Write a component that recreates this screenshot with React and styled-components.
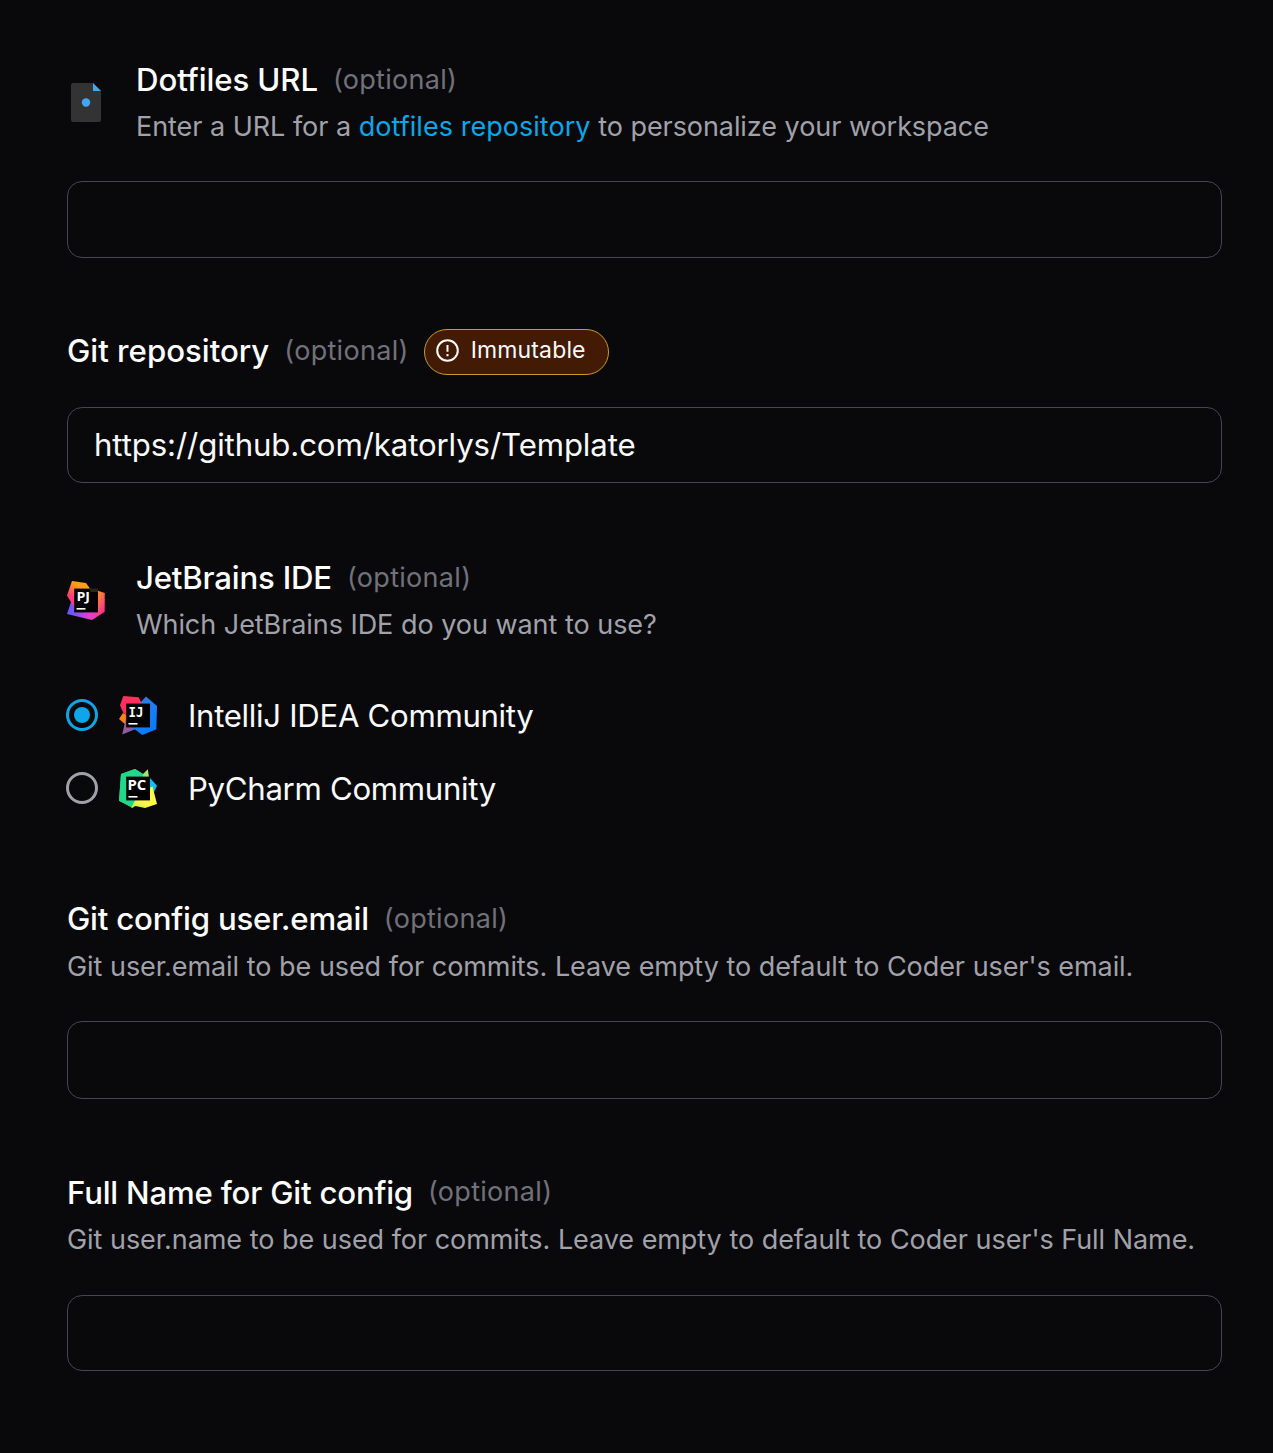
import React from "react";
import styled, { createGlobalStyle } from "styled-components";

const Global = createGlobalStyle`
  * { box-sizing: border-box; }
  body { margin: 0; background: #09090b; }
`;

const Form = styled.form`
  width: 1273px;
  min-height: 1453px;
  padding: 57px 51px 82px 67px;
  display: flex;
  flex-direction: column;
  background: #09090b;
  color: #fafafa;
  font-family: Inter, "Liberation Sans", sans-serif;
`;

const Field = styled.section`
  display: flex;
  flex-direction: column;
  gap: ${(p) => p.$gap || 31}px;
  margin-bottom: ${(p) => p.$after || 0}px;
`;

const Header = styled.header`
  display: flex;
  align-items: center;
  gap: 31px;
`;

const Labels = styled.div`
  display: flex;
  flex-direction: column;
`;

const TitleRow = styled.div`
  display: flex;
  align-items: center;
  height: 46px;
  white-space: nowrap;
`;

const Title = styled.label`
  padding-bottom: ${(p) => p.$lift ?? 2}px;
  font-size: 31.2px;
  line-height: 44px;
  font-weight: 500;
  color: #fff;
  letter-spacing: ${(p) => p.$spacing ?? -0.2}px;
`;

const Optional = styled.span`
  margin-left: 15px;
  padding-bottom: ${(p) => p.$lift ?? 2}px;
  font-size: 27px;
  line-height: 44px;
  color: #71717a;
  letter-spacing: 0.3px;
`;

const Description = styled.p`
  margin: 0;
  font-size: 27px;
  height: 47px;
  line-height: ${(p) => p.$line || 47}px;
  color: #a1a1aa;
  letter-spacing: -0.08px;
  word-spacing: 0.2px;
  white-space: nowrap;
`;

const Link = styled.a`
  color: #0ea5e9;
  letter-spacing: 0.02px;
  text-decoration: none;
`;

const Badge = styled.span`
  display: flex;
  align-items: center;
  gap: 12px;
  width: 185px;
  height: 46px;
  margin-left: 15px;
  padding: 0 0 4px 10px;
  border: 1px solid #ca9a2c;
  border-radius: 23px;
  background: #431a04;
  color: #fafafa;
  font-size: 23px;
  letter-spacing: 0.15px;
`;

const Input = styled.input`
  display: block;
  width: 1155px;
  height: ${(p) => p.$height || 77}px;
  padding: 0 26px;
  border: 1px solid #46464d;
  border-radius: 15px;
  outline: none;
  background: transparent;
  color: #fafafa;
  font: 400 31.2px Inter, "Liberation Sans", sans-serif;
  letter-spacing: -0.12px;
`;

const Options = styled.div`
  display: flex;
  flex-direction: column;
  gap: 27px;
`;

const Option = styled.label`
  display: flex;
  align-items: center;
  height: 46px;
  padding-bottom: 1px;
  font-size: 31.2px;
  letter-spacing: -0.32px;
  white-space: nowrap;
`;

const Radio = styled.span`
  display: grid;
  place-items: center;
  width: 32px;
  height: 32px;
  margin-left: -1px;
  margin-right: 21px;
  margin-bottom: 1px;
  border: 3px solid ${(p) => (p.$checked ? "#0ea5e9" : "#a1a1aa")};
  border-radius: 50%;
  &::after {
    content: "";
    width: 16px;
    height: 16px;
    border-radius: 50%;
    background: ${(p) => (p.$checked ? "#0ea5e9" : "transparent")};
  }
`;

const OptionName = styled.span`
  margin-left: 31px;
  padding-top: 1px;
`;

const Icon = styled.svg`
  display: block;
  flex: none;
  overflow: visible;
  margin-bottom: ${(p) => p.$lift || 0}px;
`;

function FileIcon() {
  return (
    <Icon $lift={2} width="38" height="39" viewBox="0 0 38 39">
      <path d="M6 0H26L34 8V37Q34 39 32 39H6Q4 39 4 37V2Q4 0 6 0Z" fill="#333" />
      <path d="M26 0L34 8H26Z" fill="#42a5f5" />
      <circle cx="19" cy="19.5" r="4.2" fill="#42a5f5" />
    </Icon>
  );
}

function Plate({ text }) {
  const letters = {
    PJ: { x: 9.4, y: 19.7, size: 12.2, width: 13.6, font: "Open Sans, sans-serif" },
    IJ: { x: 9.6, y: 20.6, size: 13.4, width: 14.8, font: "DejaVu Sans Mono, monospace" },
    PC: { x: 8.4, y: 20.6, size: 13.4, width: 18.8, font: "Open Sans, sans-serif" },
  }[text];
  return (
    <>
      <rect x="7.2" y="7.6" width="23.8" height="23.8" fill="#000" />
      <rect x="9.5" y="27" width="9" height="1.6" fill="#fff" />
      <text x={letters.x} y={letters.y} fontFamily={letters.font} fontWeight="700" fontSize={letters.size}
        fill="#fff" letterSpacing="0" textLength={letters.width} lengthAdjust="spacingAndGlyphs">{text}</text>
    </>
  );
}

function ProjectorIcon() {
  return (
    <Icon $lift={5} width="38" height="39" viewBox="0 0 38 39">
      <defs>
        <linearGradient id="pjTop" x1="0.6" y1="0" x2="0.1" y2="1">
          <stop offset="0.2" stopColor="#ff9f16" />
          <stop offset="0.65" stopColor="#ff3b78" />
        </linearGradient>
        <linearGradient id="pjBase" x1="0" y1="0.5" x2="1" y2="0.5">
          <stop offset="0.12" stopColor="#6b57ff" />
          <stop offset="0.6" stopColor="#e43fd0" />
          <stop offset="1" stopColor="#ff318c" />
        </linearGradient>
        <linearGradient id="pjSide" x1="0" y1="0" x2="0.5" y2="1">
          <stop offset="0" stopColor="#ff9a28" />
          <stop offset="0.5" stopColor="#ff6652" />
          <stop offset="1" stopColor="#ff318c" />
        </linearGradient>
      </defs>
      <path d="M5 18L0 33L25 39L37.4 31V18Z" fill="url(#pjBase)" />
      <path d="M5 0L19 2L24 9L7 26L0 14.5Z" fill="url(#pjTop)" />
      <path d="M30 9.5L37.8 12L37.4 31L30 34Z" fill="url(#pjSide)" />
      <Plate text="PJ" />
      <path d="M22 7.6H31V11H24Z" fill="#2b2420" />
    </Icon>
  );
}

function IntelliJIcon() {
  return (
    <Icon width="38" height="39" viewBox="0 0 38 39">
      <defs>
        <linearGradient id="ijBlue" x1="0" y1="0" x2="0.5" y2="1">
          <stop offset="0" stopColor="#655fb5" />
          <stop offset="0.3" stopColor="#277ee7" />
          <stop offset="1" stopColor="#087cff" />
        </linearGradient>
        <linearGradient id="ijPurple" x1="0" y1="0" x2="1" y2="0.3">
          <stop offset="0" stopColor="#b15782" />
          <stop offset="0.65" stopColor="#7660b0" />
          <stop offset="1" stopColor="#087cff" />
        </linearGradient>
      </defs>
      <path d="M4 17L0 23L7 29L17 24Z" fill="#fc801d" />
      <path d="M7 22L3.2 38.5L24 30Z" fill="url(#ijPurple)" />
      <path d="M27 0.6L38 10L37.3 33.2L23.3 39L14 32L20 8Z" fill="url(#ijBlue)" />
      <path d="M4.3 0L19.6 1.3L23 8L13 22L4.4 17L1 9.2Z" fill="#fe315d" />
      <Plate text="IJ" />
    </Icon>
  );
}

function PyCharmIcon() {
  return (
    <Icon width="38" height="39" viewBox="0 0 38 39">
      <defs>
        <linearGradient id="pcGreen" x1="0" y1="0.5" x2="1" y2="0.5">
          <stop offset="0.2" stopColor="#21d789" />
          <stop offset="1" stopColor="#b5e866" />
        </linearGradient>
        <linearGradient id="pcYellow" x1="0" y1="1" x2="0.7" y2="0">
          <stop offset="0" stopColor="#c6ed54" />
          <stop offset="0.4" stopColor="#fcf84a" />
        </linearGradient>
      </defs>
      <path d="M31 9L38 16.7L34 25L27 20Z" fill="#07c3f2" />
      <path d="M2 5L16 0L24 5L28.8 0.3L31 15L13.7 39L0 31.7Z" fill="url(#pcGreen)" />
      <path d="M2 5L16 0L24 5L14 38.8L0 31.7Z" fill="#21d789" />
      <path d="M20 24L33.5 17.5L38 35L26 39L16.5 37L12 39Z" fill="url(#pcYellow)" />
      <Plate text="PC" />
    </Icon>
  );
}

function WarningIcon() {
  return (
    <Icon width="24" height="24" viewBox="0 0 24 24" fill="none" stroke="#fafafa" strokeWidth="2">
      <circle cx="12.5" cy="12.5" r="10.3" />
      <path d="M12.5 7V13.7M12.5 16V18.3" />
    </Icon>
  );
}

export default function App() {
  return (
    <>
      <Global />
      <Form>
        <Field $after={71}>
          <Header>
            <FileIcon />
            <Labels>
              <TitleRow><Title $lift={0} $spacing={-0.1}>Dotfiles URL</Title><Optional $lift={0}>(optional)</Optional></TitleRow>
              <Description>Enter a URL for a <Link>dotfiles repository</Link> to personalize your workspace</Description>
            </Labels>
          </Header>
          <Input />
        </Field>

        <Field $gap={32} $after={73}>
          <TitleRow>
            <Title $spacing={0}>Git repository</Title><Optional>(optional)</Optional>
            <Badge><WarningIcon />Immutable</Badge>
          </TitleRow>
          <Input $height={76} defaultValue="https://github.com/katorlys/Template" />
        </Field>

        <Field $gap={44} $after={84}>
          <Header>
            <ProjectorIcon />
            <Labels>
              <TitleRow><Title>JetBrains IDE</Title><Optional>(optional)</Optional></TitleRow>
              <Description $line={45}>Which JetBrains IDE do you want to use?</Description>
            </Labels>
          </Header>
          <Options>
            <Option><Radio $checked /><IntelliJIcon /><OptionName>IntelliJ IDEA Community</OptionName></Option>
            <Option><Radio /><PyCharmIcon /><OptionName>PyCharm Community</OptionName></Option>
          </Options>
        </Field>

        <Field $gap={32} $after={71}>
          <Labels>
            <TitleRow><Title $lift={0}>Git config user.email</Title><Optional $lift={0}>(optional)</Optional></TitleRow>
            <Description $line={49}>Git user.email to be used for commits. Leave empty to default to Coder user's email.</Description>
          </Labels>
          <Input $height={78} />
        </Field>

        <Field $gap={32}>
          <Labels>
            <TitleRow><Title $lift={0}>Full Name for Git config</Title><Optional>(optional)</Optional></TitleRow>
            <Description>Git user.name to be used for commits. Leave empty to default to Coder user's Full Name.</Description>
          </Labels>
          <Input $height={76} />
        </Field>
      </Form>
    </>
  );
}
